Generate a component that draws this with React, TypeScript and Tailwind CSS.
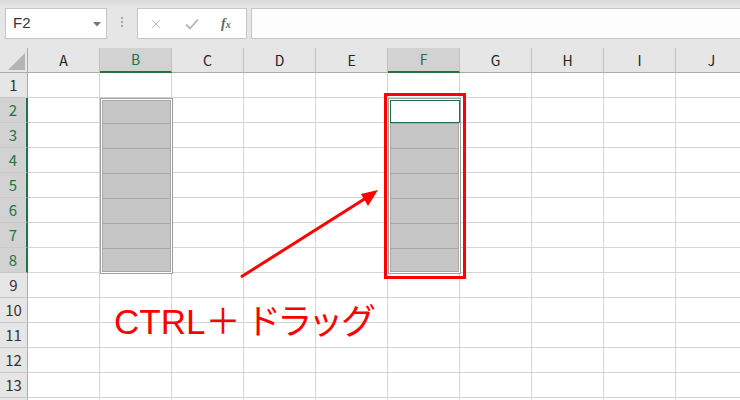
import { X } from 'lucide-react';

const COLS = ['A', 'B', 'C', 'D', 'E', 'F', 'G', 'H', 'I', 'J'];
const ROWS = Array.from({ length: 14 }, (_, i) => i + 1);
const SEL_COLS = ['B', 'F'];
const isSelRow = (r: number) => r >= 2 && r <= 8;

// gray block selection with inner row dividers, 7 rows tall
const SelectionBlock = ({ left, active }: { left: string; active?: boolean }) => (
    <div className={`absolute top-[98px] ${left} w-[73px] h-[176px] border border-[#9e9e9e] bg-white p-px`}>
        <div className="relative flex flex-col h-full border border-[#a8a8a8] bg-[#c6c6c6]">
            <div className={`h-[22px] ${active ? 'bg-white' : ''}`} />
            <div className="h-[25px] border-t border-[#a8a8a8]" />
            <div className="h-[25px] border-t border-[#a8a8a8]" />
            <div className="h-[25px] border-t border-[#a8a8a8]" />
            <div className="h-[25px] border-t border-[#a8a8a8]" />
            <div className="h-[25px] border-t border-[#a8a8a8]" />
            <div className="flex-1 border-t border-[#a8a8a8]" />
            {active && (
                <div className="absolute -left-px -top-px w-[70px] h-[23px] border border-[#217346] bg-white" />
            )}
        </div>
    </div>
);

export default function App() {
    return (
        <div className="relative w-[740px] h-[400px] overflow-hidden bg-white font-['Noto_Sans_CJK_JP',sans-serif] text-[#222]">
            {/* formula bar area */}
            <div className="flex items-start h-[48px] pt-[8px] pl-[5px] gap-[4px] bg-[linear-gradient(to_bottom,#d8d8d8,#e6e6e6_7px)]">
                <div className="relative flex items-center w-[102px] h-[31px] bg-white border border-[#c6c6c6] pl-[7px] text-[15px] text-[#333] font-['Liberation_Sans',sans-serif]">
                    F2
                    <svg className="absolute left-[87px] top-[13px]" width="8" height="5" viewBox="0 0 8 5">
                        <path d="M0 0H8L4 4.5Z" fill="#777" />
                    </svg>
                </div>
                <div className="flex flex-col items-center gap-[2px] w-[22px] pt-[9px]">
                    <span className="w-[2px] h-[2px] bg-[#a6a6a6]" />
                    <span className="w-[2px] h-[2px] bg-[#a6a6a6]" />
                    <span className="w-[2px] h-[2px] bg-[#a6a6a6]" />
                </div>
                <div className="flex items-center w-[110px] h-[31px] bg-white border border-[#c6c6c6]">
                    <X className="ml-[11px]" size={14} strokeWidth={1.6} color="#b6b6b6" />
                    <svg className="ml-[22px]" width="14" height="12" viewBox="0 0 14 12">
                        <path d="M1 6.5L5 10.5L13 1.5" fill="none" stroke="#b6b6b6" strokeWidth="1.8" />
                    </svg>
                    <span className="ml-[22px] font-['Liberation_Serif',serif] italic font-bold text-[14px] text-[#666] leading-none">
                        f<span className="text-[10px]">x</span>
                    </span>
                </div>
                <div className="flex-1 h-[31px] bg-[#fdfdfd] border border-[#c6c6c6] border-r-0" />
            </div>

            {/* sheet grid */}
            <div className="grid grid-cols-[28px_repeat(10,72px)] w-max">
                <div className="relative h-[25px] bg-[#e6e6e6] border-r border-b border-[#ababab]">
                    <svg className="absolute left-[8px] top-[5px]" width="17" height="17" viewBox="0 0 17 17">
                        <path d="M17 0V17H0Z" fill="#b4b4b4" />
                    </svg>
                </div>
                {COLS.map((c) => {
                    const sel = SEL_COLS.includes(c);
                    return (
                        <div
                            key={c}
                            className={`flex items-center justify-center h-[25px] text-[14px] border-r border-[#c0c0c0] ${sel ? 'bg-[#d2d2d2] text-[#217346] border-b-2 border-b-[#217346]' : 'bg-[#e6e6e6] border-b border-b-[#ababab]'}`}
                        >
                            {c}
                        </div>
                    );
                })}
                {ROWS.map((r) => (
                    <div key={r} className="contents">
                        <div
                            className={`flex items-center justify-center h-[25px] text-[15px] border-b border-[#c8c8c8] ${isSelRow(r) ? 'bg-[#d2d2d2] text-[#217346] border-r-2 border-r-[#217346]' : 'bg-[#e6e6e6] text-[#333] border-r border-r-[#ababab]'}`}
                        >
                            {r < 14 ? r : ''}
                        </div>
                        {COLS.map((c) => (
                            <div key={c} className="h-[25px] border-r border-b border-[#d4d4d4]" />
                        ))}
                    </div>
                ))}
            </div>

            {/* selections */}
            <SelectionBlock left="left-[100px]" />
            <SelectionBlock left="left-[388px]" active />
            <div className="absolute left-[384px] top-[93px] w-[82px] h-[186px] border-[3px] border-[#ff0000]" />

            {/* arrow */}
            <svg className="absolute left-0 top-0" width="740" height="400" viewBox="0 0 740 400">
                <line x1="241" y1="277" x2="366" y2="198" stroke="#ff0000" strokeWidth="3" />
                <path d="M378 190L368 206L361 194Z" fill="#ff0000" />
            </svg>

            <div className="absolute left-[114px] top-[304px] whitespace-nowrap text-[35px] leading-none text-[#ff0000] font-['Liberation_Sans','Noto_Sans_CJK_JP',sans-serif] [font-feature-settings:'palt']">
                CTRL＋ <span className="tracking-[2px]">ドラッグ</span>
            </div>
        </div>
    );
}
